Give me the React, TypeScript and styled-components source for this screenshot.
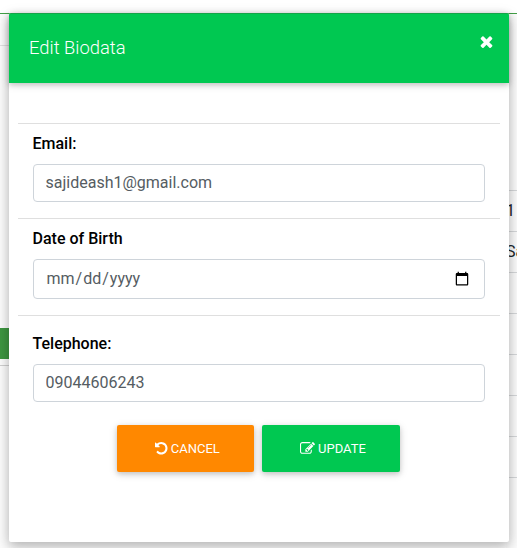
import React from "react";
import styled, { createGlobalStyle } from "styled-components";

const GlobalStyle = createGlobalStyle`
  *, *::before, *::after { box-sizing: border-box; }
  body { margin: 0; background: #fff; font-family: Roboto, "Liberation Sans", sans-serif; overflow: hidden; }
`;

const Page = styled.main`
  position: relative;
  width: 517px;
  height: 548px;
  overflow: hidden;
  background: #fff;
`;

const TopBar = styled.div`
  height: 14px;
  border-bottom: 1px solid #43a047;
`;

const Backdrop = styled.div`
  display: flex;
  justify-content: space-between;
  height: 534px;
`;

const Sidebar = styled.div`
  width: 10px;
  background: #fcfcfc;
`;

const SidebarHead = styled.div`
  height: 32px;
  border-bottom: 1px solid #e2e2e2;
`;

const SidebarButton = styled.div`
  height: 31px;
  margin-top: 282px;
  background: #3d9641;
`;

const SidebarEdge = styled.div`
  height: 7px;
  border-bottom: 1px solid #d0d0d0;
`;

const Table = styled.div`
  width: 11px;
  padding-top: 176px;
  background: #fcfcfc;
`;

const TableRow = styled.div`
  height: 41px;
  border-top: 1px solid #d6d8da;
  padding-top: 10px;
  font-size: 16px;
  line-height: 19px;
  color: #212529;
  white-space: nowrap;
`;

const Dialog = styled.section`
  position: absolute;
  left: 9px;
  top: 13px;
  width: 500px;
  height: 529px;
  background: #fff;
  border-radius: 2px;
  box-shadow: 0 5px 11px rgba(0, 0, 0, 0.18), 0 4px 15px rgba(0, 0, 0, 0.15);
`;

const Header = styled.header`
  display: flex;
  justify-content: space-between;
  height: 70px;
  padding: 22px 15px 0 20px;
  border-top: 1px solid #14a548;
  border-radius: 2px 2px 0 0;
  background: #00c851;
  color: #fff;
  box-shadow: 0 2px 5px rgba(0, 0, 0, 0.16), 0 2px 10px rgba(0, 0, 0, 0.12);
`;

const Title = styled.h1`
  margin: 0;
  font-size: 18.4px;
  font-weight: 300;
  line-height: 24px;
`;

const CloseButton = styled.button`
  display: flex;
  align-items: flex-start;
  justify-content: center;
  width: 16px;
  height: 13px;
  margin-top: -1px;
  padding: 0;
  border: 0;
  background: none;
  color: #fff;
`;

const Form = styled.form`
  padding: 40px 9px 0;
`;

const Group = styled.div<{ $height: number; $top: number }>`
  height: ${(p) => p.$height}px;
  padding: ${(p) => p.$top}px 15px 0;
  border-top: 1px solid #dfdfdf;
`;

const Label = styled.label`
  display: block;
  height: 24px;
  margin-bottom: 8px;
  margin-left: -0.5px;
  font-size: 16px;
  font-weight: 500;
  line-height: 24px;
  color: #000;
`;

const Input = styled.input`
  display: block;
  width: 452px;
  height: 38px;
  padding: 5px 12px 7px 11.5px;
  border: 1px solid #ced4da;
  border-radius: 4px;
  background: #fff;
  font: 400 16px/24px Roboto, sans-serif;
  color: #555c62;
`;

const DateInput = styled(Input)`
  height: 40px;
  padding: 6px 12px 6px 11.5px;
`;

const Actions = styled.div`
  display: flex;
  gap: 8px;
  padding-left: 99px;
`;

const Button = styled.button<{ $color: string; $width: number }>`
  display: flex;
  align-items: center;
  justify-content: center;
  gap: 3px;
  width: ${(p) => p.$width}px;
  height: 47px;
  padding: 0 0 0 4px;
  border: 0;
  border-radius: 2px;
  background: ${(p) => p.$color};
  color: #fff;
  font: 400 13px/20px Roboto, sans-serif;
  text-transform: uppercase;
  box-shadow: 0 2px 5px rgba(0, 0, 0, 0.16), 0 2px 10px rgba(0, 0, 0, 0.12);
`;

const Glyph = styled.svg`
  display: block;
  flex: none;
  fill: currentColor;
`;

const paths = {
  times:
    "M1490 1322q0 40-28 68l-136 136q-28 28-68 28t-68-28l-294-294-294 294q-28 28-68 28t-68-28l-136-136q-28-28-28-68t28-68l294-294-294-294q-28-28-28-68t28-68l136-136q28-28 68-28t68 28l294 294 294-294q28-28 68-28t68 28l136 136q28 28 28 68t-28 68l-294 294 294 294q28 28 28 68z",
  undo:
    "M1664 896q0 156-61 298t-164 245-245 164-298 61q-172 0-327-72.5t-264-204.5q-7-10-6.5-22.5t8.5-20.5l137-138q10-9 25-9 16 2 23 12 73 95 179 147t225 52q104 0 198.5-40.5t163.5-109.5 109.5-163.5 40.5-198.5-40.5-198.5-109.5-163.5-163.5-109.5-198.5-40.5q-98 0-188 35.5t-160 101.5l137 138q31 30 14 69-17 40-59 40h-448q-26 0-45-19t-19-45v-448q0-42 40-59 39-17 69 14l130 129q107-101 244.5-156.5t284.5-55.5q156 0 298 61t245 164 164 245 61 298z",
  edit:
    "M888 1184l116-116-152-152-116 116v56h96v96h56zm440-720q-16-16-33 1l-350 350q-17 17-1 33t33-1l350-350q17-17 1-33zm80 594v190q0 119-84.5 203.5t-203.5 84.5h-832q-119 0-203.5-84.5t-84.5-203.5v-832q0-119 84.5-203.5t203.5-84.5h832q63 0 117 25 15 7 18 23 3 17-9 29l-49 49q-14 14-32 8-23-6-45-6h-832q-66 0-113 47t-47 113v832q0 66 47 113t113 47h832q66 0 113-47t47-113v-126q0-13 9-22l64-64q15-15 35-7t20 29zm-96-738l288 288-672 672h-288v-288zm444 132l-92 92-288-288 92-92q28-28 68-28t68 28l152 152q28 28 28 68t-28 68z",
};

export default function App() {
  return (
    <>
      <GlobalStyle />
      <Page>
        <TopBar />
        <Backdrop>
          <Sidebar>
            <SidebarHead />
            <SidebarButton />
            <SidebarEdge />
          </Sidebar>
          <Table>
            {["1", "Sa", "", "", "", "", "", ""].map((text, i) => (
              <TableRow key={i}>{text}</TableRow>
            ))}
          </Table>
        </Backdrop>
        <Dialog role="dialog" aria-labelledby="title">
          <Header>
            <Title id="title">Edit Biodata</Title>
            <CloseButton aria-label="Close">
              <Glyph viewBox="302 238 1188 1316" width="13" height="13">
                <path d={paths.times} />
              </Glyph>
            </CloseButton>
          </Header>
          <Form>
            <Group $height={95} $top={8}>
              <Label htmlFor="email">Email:</Label>
              <Input id="email" defaultValue="sajideash1@gmail.com" />
            </Group>
            <Group $height={97} $top={8}>
              <Label htmlFor="dob">Date of Birth</Label>
              <DateInput id="dob" type="date" />
            </Group>
            <Group $height={110} $top={16}>
              <Label htmlFor="phone">Telephone:</Label>
              <Input id="phone" defaultValue="09044606243" />
            </Group>
            <Actions>
              <Button type="button" $color="#ff8800" $width={137}>
                <Glyph viewBox="128 128 1536 1536" width="12.5" height="12.5">
                  <path d={paths.undo} />
                </Glyph>
                Cancel
              </Button>
              <Button type="button" $color="#00c851" $width={138}>
                <Glyph viewBox="0 0 1792 1792" width="15" height="15">
                  <path d={paths.edit} />
                </Glyph>
                Update
              </Button>
            </Actions>
          </Form>
        </Dialog>
      </Page>
    </>
  );
}
